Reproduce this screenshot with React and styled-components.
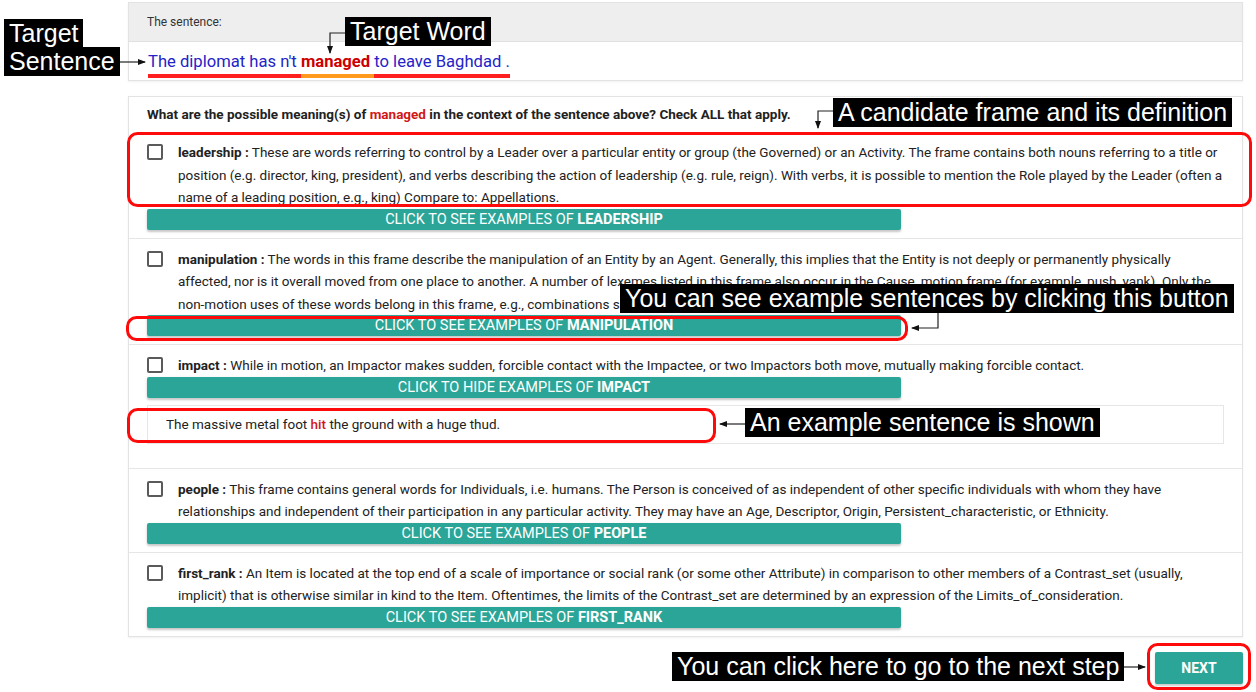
import React from "react";
import styled, { createGlobalStyle } from "styled-components";

const GlobalStyle = createGlobalStyle`
  html, body { margin: 0; padding: 0; background: #fff; }
  body { font-family: Roboto, "Noto Sans", Arial, sans-serif; color: #222; }
  * { box-sizing: border-box; }
`;

const Page = styled.div`
  position: relative;
  width: 1256px;
  height: 692px;
  padding: 2px 13px 0 128px;
  overflow: hidden;
`;

const Card = styled.section`
  background: #fff;
  border: 1px solid #e3e3e3;
  box-shadow: 0 1px 2px rgba(0, 0, 0, 0.06);
  margin-top: ${(p) => p.$gap || 0}px;
`;

const CardHeader = styled.div`
  height: 39px;
  display: flex;
  align-items: center;
  padding: 0 18px;
  background: #eeeeee;
  border-bottom: 1px solid #e0e0e0;
  font-size: 12px;
  color: #333;
`;

const SentenceBody = styled.div`
  height: 38px;
  padding: 9px 18px 0 19px;
  font-size: 16.6px;
  color: #2323c8;
`;

const Underlined = styled.span`
  display: inline-block;
  padding-bottom: 2px;
  border-bottom: 4px solid ${(p) => p.$color};
  white-space: pre;
  line-height: 21px;
`;

const Target = styled.strong`
  color: #cc0000;
  font-weight: 700;
`;

const Question = styled.div`
  padding: 6px 18px 7px;
  font-size: 13.5px;
  font-weight: 700;
  line-height: 22px;
  color: #222;
`;

const Red = styled.span`
  color: #d01818;
  font-weight: ${(p) => p.$weight || "inherit"};
`;

const Row = styled.div`
  padding: 9px 18px 8px 18px;
  border-top: ${(p) => (p.$first ? "none" : "1px solid #e6e6e6")};
`;

const RowHead = styled.label`
  display: flex;
  align-items: flex-start;
`;

const Box = styled.span`
  flex: none;
  width: 16px;
  height: 16px;
  margin: 3px 15px 0 0;
  border: 2px solid #5a5a5a;
  border-radius: 2px;
  background: #fff;
`;

const Definition = styled.div`
  font-size: 13.5px;
  line-height: 22.5px;
  color: #222;
`;

const Name = styled.b`
  font-weight: 700;
`;

const ExampleButton = styled.button`
  display: block;
  width: 70%;
  height: 21px;
  padding: 0;
  border: none;
  border-radius: 2px;
  background: #2ba597;
  color: #fff;
  font-family: Roboto, Arial, sans-serif;
  font-size: 14.5px;
  line-height: 21px;
  text-transform: uppercase;
  box-shadow: 0 2px 2px rgba(0, 0, 0, 0.18), 0 1px 4px rgba(0, 0, 0, 0.08);
  cursor: pointer;
  b { font-weight: 700; }
`;

const Example = styled.div`
  height: 39px;
  margin: 7px 0 16px;
  padding: 0 18px;
  display: flex;
  align-items: center;
  border: 1px solid #e6e6e6;
  font-size: 13.5px;
  color: #222;
`;

const Footer = styled.div`
  display: flex;
  justify-content: flex-end;
  margin-top: 15px;
`;

const NextButton = styled.button`
  width: 88px;
  height: 32px;
  border: none;
  border-radius: 2px;
  background: #2ba597;
  color: #fff;
  font-family: Roboto, Arial, sans-serif;
  font-size: 14px;
  font-weight: 700;
  box-shadow: 0 2px 2px rgba(0, 0, 0, 0.2);
`;

/* annotation layer */
const Label = styled.div`
  position: absolute;
  left: ${(p) => p.$x}px;
  top: ${(p) => p.$y}px;
  z-index: 3;
  height: 29px;
  padding: 0 5px;
  background: #000;
  color: #fff;
  font-family: "Liberation Sans", Arial, sans-serif;
  font-size: 25px;
  line-height: 29px;
  white-space: nowrap;
`;

const Overlay = styled.svg`
  position: absolute;
  left: 0;
  top: 0;
  z-index: 2;
  pointer-events: none;
`;

const frames = [
  {
    name: "leadership",
    text:
      "These are words referring to control by a Leader over a particular entity or group (the Governed) or an Activity. The frame contains both nouns referring to a title or position (e.g. director, king, president), and verbs describing the action of leadership (e.g. rule, reign). With verbs, it is possible to mention the Role played by the Leader (often a name of a leading position, e.g., king) Compare to: Appellations.",
  },
  {
    name: "manipulation",
    text:
      "The words in this frame describe the manipulation of an Entity by an Agent. Generally, this implies that the Entity is not deeply or permanently physically affected, nor is it overall moved from one place to another. A number of lexemes listed in this frame also occur in the Cause_motion frame (for example, push, yank). Only the non-motion uses of these words belong in this frame, e.g., combinations such as push on.",
  },
  {
    name: "impact",
    text:
      "While in motion, an Impactor makes sudden, forcible contact with the Impactee, or two Impactors both move, mutually making forcible contact.",
    open: true,
  },
  {
    name: "people",
    text:
      "This frame contains general words for Individuals, i.e. humans. The Person is conceived of as independent of other specific individuals with whom they have relationships and independent of their participation in any particular activity. They may have an Age, Descriptor, Origin, Persistent_characteristic, or Ethnicity.",
  },
  {
    name: "first_rank",
    text:
      "An Item is located at the top end of a scale of importance or social rank (or some other Attribute) in comparison to other members of a Contrast_set (usually, implicit) that is otherwise similar in kind to the Item. Oftentimes, the limits of the Contrast_set are determined by an expression of the Limits_of_consideration.",
  },
];

const labels = [
  { x: 4, y: 19, t: "Target" },
  { x: 4, y: 47, t: "Sentence" },
  { x: 345, y: 17, t: "Target Word" },
  { x: 833, y: 98, t: "A candidate frame and its definition" },
  { x: 620, y: 284, t: "You can see example sentences by clicking this button" },
  { x: 745, y: 408, t: "An example sentence is shown" },
  { x: 672, y: 652, t: "You can click here to go to the next step" },
];

const boxes = [
  { x: 127, y: 132, w: 1125, h: 75 },
  { x: 126, y: 316, w: 782, h: 25 },
  { x: 127, y: 408, w: 589, h: 35 },
  { x: 1147, y: 643, w: 104, h: 47 },
];

const arrows = [
  "M118 62 H145",
  "M345 33 H330 V53",
  "M833 111 H818 V128",
  "M938 313 V328 H912",
  "M745 424 H720",
  "M1120 667 H1145",
];

function Annotations() {
  return (
    <>
      <Overlay width="1256" height="692" viewBox="0 0 1256 692">
        <defs>
          <marker id="ah" markerWidth="8" markerHeight="8" refX="7" refY="4" orient="auto" markerUnits="userSpaceOnUse">
            <path d="M0 1 L8 4 L0 7 Z" fill="#111" />
          </marker>
        </defs>
        {boxes.map((b, i) => (
          <rect key={i} x={b.x + 1.5} y={b.y + 1.5} width={b.w - 3} height={b.h - 3} rx="9" fill="none" stroke="#ff0a0a" strokeWidth="3" />
        ))}
        {arrows.map((d, i) => (
          <path key={i} d={d} fill="none" stroke="#222" strokeWidth="1.2" markerEnd="url(#ah)" />
        ))}
      </Overlay>
      {labels.map((l) => (
        <Label key={l.t} $x={l.x} $y={l.y}>{l.t}</Label>
      ))}
    </>
  );
}

export default function App() {
  return (
    <Page>
      <GlobalStyle />
      <Card>
        <CardHeader>The sentence:</CardHeader>
        <SentenceBody>
          <Underlined $color="#ff1f1f">The diplomat has n't </Underlined>
          <Underlined $color="#ff9a1f"><Target>managed</Target> </Underlined>
          <Underlined $color="#ff1f1f">to leave Baghdad .</Underlined>
        </SentenceBody>
      </Card>

      <Card $gap={15}>
        <Question>
          What are the possible meaning(s) of <Red>managed</Red> in the context of the sentence above? Check ALL that apply.
        </Question>
        {frames.map((f, i) => (
          <Row key={f.name} $first={i === 0}>
            <RowHead>
              <Box />
              <Definition>
                <Name>{f.name} :</Name> {f.text}
              </Definition>
            </RowHead>
            <ExampleButton>
              Click to {f.open ? "hide" : "see"} examples of <b>{f.name}</b>
            </ExampleButton>
            {f.open && (
              <Example>
                <span>
                  The massive metal foot <Red $weight={500}>hit</Red> the ground with a huge thud.
                </span>
              </Example>
            )}
          </Row>
        ))}
      </Card>

      <Footer>
        <NextButton>NEXT</NextButton>
      </Footer>

      <Annotations />
    </Page>
  );
}
